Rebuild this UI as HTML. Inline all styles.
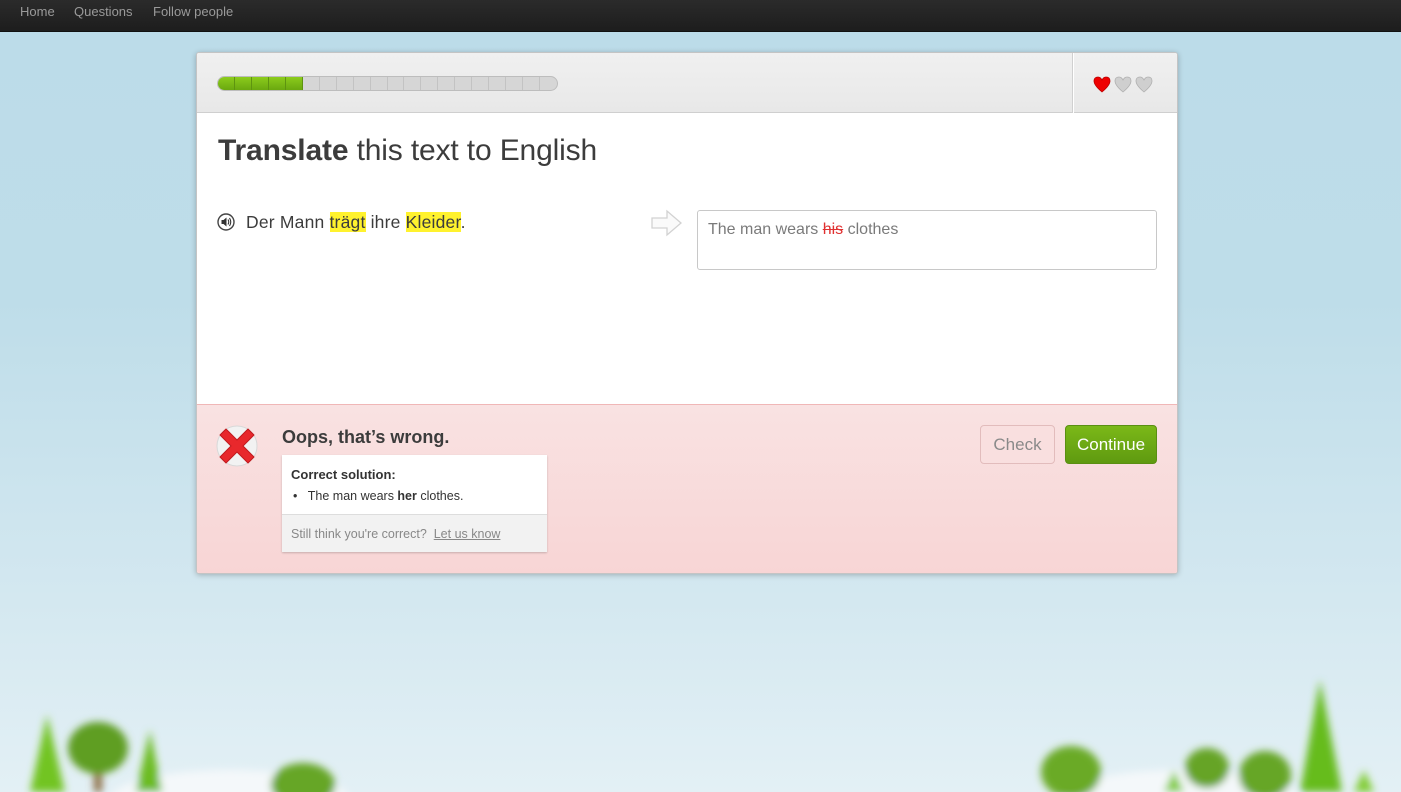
<!DOCTYPE html>
<html><head><meta charset="utf-8"><style>
*{margin:0;padding:0;box-sizing:border-box}
body{width:1401px;height:792px;overflow:hidden;position:relative;font-family:"Liberation Sans",Arial,sans-serif;background:linear-gradient(#bcdce9 0,#bedde9 300px,#d0e6ef 550px,#e3f0f5 792px)}
.nav{position:absolute;top:0;left:0;width:1401px;height:32px;background:linear-gradient(#2b2b2b,#1d1d1d);border-bottom:1px solid #111}
.nav span{position:absolute;top:4px;font-size:13px;color:#9a9a9a}
.card{position:absolute;left:196px;top:52px;width:982px;height:522px;border:1px solid #c4c4c4;border-radius:3px;box-shadow:0 1px 6px rgba(0,0,0,.25);overflow:hidden;background:#fff}
.head{position:absolute;left:0;top:0;width:980px;height:60px;background:linear-gradient(#f0f0f0,#e8e8e8);border-bottom:1px solid #cfcfcf}
.div{position:absolute;left:875px;top:0;width:2px;height:60px;border-left:1px solid #d0d0d0;background:#fff}
.bar{position:absolute;left:20px;top:23px;width:341px;height:15px;border:1px solid #bdbdbd;border-radius:8px;background:#d6d6d6;overflow:hidden;display:flex}
.bar i{display:block;width:17px;height:100%;border-right:1px solid #c3c3c3}
.bar i.g{background:linear-gradient(#8ccc1d,#6aa80f);border-right:1px solid #5e9410}
.foot{position:absolute;left:0;top:351px;width:980px;height:169px;background:linear-gradient(#f9e2e2,#f8d5d5);border-top:1px solid #f0b7b7}
.btn{position:absolute;top:20px;height:39px;border-radius:4px;font-size:17px;text-align:center;line-height:37px}
</style></head><body>
<div class="nav"><span style="left:20px">Home</span><span style="left:74px">Questions</span><span style="left:153px">Follow people</span></div>

<svg style="position:absolute;left:0;top:650px" width="1401" height="142">
<defs><filter id="b"><feGaussianBlur stdDeviation="4"/></filter></defs>
<g filter="url(#b)">
<ellipse cx="230" cy="150" rx="120" ry="30" fill="#f4f8fa"/>
<ellipse cx="1180" cy="150" rx="120" ry="30" fill="#f4f8fa"/>
<polygon points="47,65 30,142 65,142" fill="#72c420"/>
<polygon points="150,80 136,142 162,142" fill="#6cbc20"/>
<rect x="94" y="110" width="8" height="32" fill="#8a6a40"/>
<ellipse cx="98" cy="98" rx="30" ry="26" fill="#5e9e22"/>
<ellipse cx="303" cy="135" rx="32" ry="22" fill="#66a626"/>
<ellipse cx="1071" cy="122" rx="30" ry="26" fill="#6aaa26"/>
<ellipse cx="1207" cy="118" rx="22" ry="20" fill="#66a426"/>
<ellipse cx="1265" cy="125" rx="26" ry="24" fill="#66a626"/>
<polygon points="1320,30 1300,142 1342,142" fill="#66bc1c"/>
<polygon points="1174,120 1164,142 1184,142" fill="#80cc30"/>
<polygon points="1364,120 1354,142 1374,142" fill="#80cc30"/>
</g></svg>

<div class="card">
 <div class="head">
  <div class="bar"><i class="g"></i><i class="g"></i><i class="g"></i><i class="g"></i><i class="g"></i><i></i><i></i><i></i><i></i><i></i><i></i><i></i><i></i><i></i><i></i><i></i><i></i><i></i><i></i><i style="border:0"></i></div>
  <div class="div"></div>
  <svg style="position:absolute;left:896px;top:23px" width="64" height="18" viewBox="0 0 64 18">
   <path d="M9 16 C3 11 1 8 1 5 C1 2 3 1 5 1 C7 1 8 2 9 4 C10 2 11 1 13 1 C15 1 17 2 17 5 C17 8 15 11 9 16Z" fill="#e00" stroke="#b00" stroke-width=".8"/>
   <path d="M30 16 C24 11 22 8 22 5 C22 2 24 1 26 1 C28 1 29 2 30 4 C31 2 32 1 34 1 C36 1 38 2 38 5 C38 8 36 11 30 16Z" fill="#cfcfcf" stroke="#b0b0b0" stroke-width=".8"/>
   <path d="M51 16 C45 11 43 8 43 5 C43 2 45 1 47 1 C49 1 50 2 51 4 C52 2 53 1 55 1 C57 1 59 2 59 5 C59 8 57 11 51 16Z" fill="#cfcfcf" stroke="#b0b0b0" stroke-width=".8"/>
  </svg>
 </div>
 <div style="position:absolute;left:21px;top:81px;font-size:30px;letter-spacing:-0.15px;color:#3c3c3c"><b>Translate</b> this text to English</div>
 <svg style="position:absolute;left:20px;top:160px" width="18" height="18" viewBox="0 0 18 18"><circle cx="9" cy="9" r="8" fill="#fff" stroke="#444" stroke-width="1.4"/><path d="M4.5 7h2l3-2.5v9L6.5 11h-2z" fill="#333"/><path d="M11 6.5q1.5 2.5 0 5M12.5 5q2.5 4 0 8" stroke="#333" stroke-width="1.1" fill="none"/></svg>
 <div style="position:absolute;left:49px;top:159px;font-size:17.5px;letter-spacing:0.2px;color:#3c3c3c">Der Mann <span style="background:#fff22e">trägt</span> ihre <span style="background:#fff22e">Kleider</span>.</div>
 <svg style="position:absolute;left:453px;top:155px" width="34" height="30" viewBox="0 0 34 30"><path d="M2 10h15V3l14 12-14 12v-7H2z" fill="#fafafa" stroke="#d2d2d2" stroke-width="1.3"/></svg>
 <div style="position:absolute;left:500px;top:157px;width:460px;height:60px;border:1px solid #c8c8c8;border-radius:3px;padding:10px 10px;font-size:16px;color:#7a7a7a">The man wears <span style="color:#e03030;text-decoration:line-through">his</span> clothes</div>
 <div class="foot">
  <svg style="position:absolute;left:19px;top:19px" width="44" height="44" viewBox="0 0 44 44"><circle cx="21" cy="22" r="20" fill="#f2f2f2" stroke="#d8d8d8"/><path d="M4 11l6-6 11 11 11-11 6 6-11 11 11 11-6 6-11-11-11 11-6-6 11-11z" fill="#e8282c" stroke="#c01a1e" stroke-width="1" stroke-linejoin="round"/></svg>
  <div style="position:absolute;left:85px;top:22px;font-size:18px;font-weight:bold;color:#3c3c3c">Oops, that’s wrong.</div>
  <div style="position:absolute;left:85px;top:50px;width:265px;height:97px;background:#fff;box-shadow:0 1px 2px rgba(0,0,0,.2)">
   <div style="position:absolute;left:9px;top:12px;font-size:13px;font-weight:bold;color:#333">Correct solution:</div>
   <div style="position:absolute;left:11px;top:34px;font-size:12.5px;color:#333">•&nbsp;&nbsp;&nbsp;The man wears <b>her</b> clothes.</div>
   <div style="position:absolute;left:0;top:59px;width:265px;height:38px;background:#f2f2f2;border-top:1px solid #ddd;padding:12px 9px;font-size:12.5px;color:#888">Still think you're correct?&nbsp; <span style="text-decoration:underline">Let us know</span></div>
  </div>
  <div class="btn" style="left:783px;width:75px;border:1px solid #e2bcbc;color:#8a8a8a;background:#f9dfdf">Check</div>
  <div class="btn" style="left:868px;width:92px;background:linear-gradient(#7bb818,#5f9a10);border:1px solid #5a8f12;color:#fff">Continue</div>
 </div>
</div>
</body></html>
